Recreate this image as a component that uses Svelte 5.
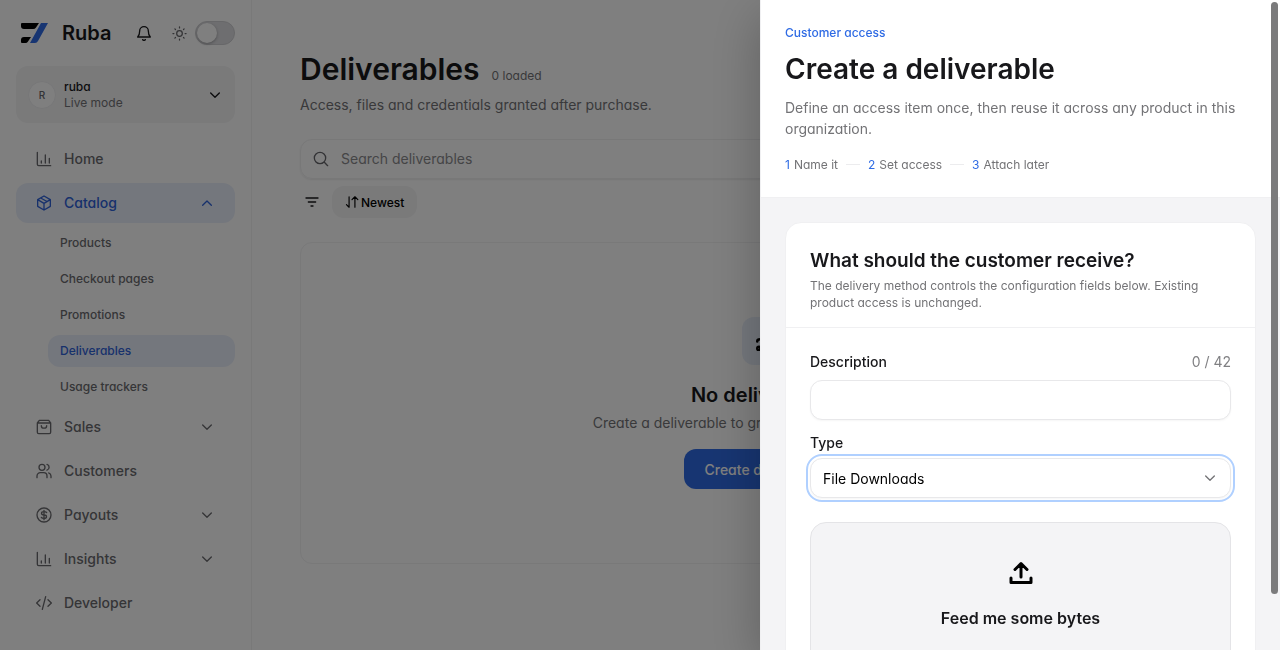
<script>
  let drawerOpen = $state(true);
  let catalogOpen = $state(true);
  let darkMode = $state(false);
  let description = $state("");
  let type = $state("files");

  const MAX_DESCRIPTION = 42;

  const nav = [
    { label: "Home", icon: "chart" },
    {
      label: "Catalog",
      icon: "box",
      active: true,
      children: ["Products", "Checkout pages", "Promotions", "Deliverables", "Usage trackers"],
    },
    { label: "Sales", icon: "bag", expandable: true },
    { label: "Customers", icon: "users" },
    { label: "Payouts", icon: "dollar", expandable: true },
    { label: "Insights", icon: "chart", expandable: true },
    { label: "Developer", icon: "code" },
  ];

  const steps = ["Name it", "Set access", "Attach later"];
</script>

{#snippet icon(name, size = 16, stroke = 2)}
  <svg
    class="icon"
    width={size}
    height={size}
    viewBox="0 0 24 24"
    fill="none"
    stroke="currentColor"
    stroke-width={stroke}
    stroke-linecap="round"
    stroke-linejoin="round"
    aria-hidden="true"
  >
    {#if name === "chart"}
      <path d="M2 2v18a2 2 0 0 0 2 2h18M8 18v-3M14 18V6M20 18v-7" />
    {:else if name === "box"}
      <path d="M12 1.500 21.500 7v10L12 22.500 2.500 17V7zM2.500 7l9.500 5.500L21.500 7M12 12.500v10M7 4.500l9.500 5.300" />
    {:else if name === "bag"}
      <path d="M2 6v14a2 2 0 0 0 2 2h16a2 2 0 0 0 2-2V6l-3-4H5zM2 6h20M8 10c0 5 8 5 8 0" />
    {:else if name === "users"}
      <circle cx="9" cy="6.500" r="4.500" />
      <path d="M1.500 22v-2.500a5 5 0 0 1 5-5h5a5 5 0 0 1 5 5V22M16.500 2.200a4.500 4.500 0 0 1 0 8.600M22.500 22v-2.500a5 5 0 0 0-3.500-4.700" />
    {:else if name === "dollar"}
      <circle cx="12" cy="12" r="10.500" />
      <path d="M16 8.500c-.6-1-1.800-1.500-4-1.500-5 0-5 5 0 5s5 5 0 5c-2.200 0-3.400-.5-4-1.500M12 5v14" />
    {:else if name === "code"}
      <path d="M6 7l-5 5 5 5M18 7l5 5-5 5M14.500 2.500l-5 19" />
    {:else if name === "down"}
      <path d="M5.500 9l6.500 6.500L18.500 9" />
    {:else if name === "up"}
      <path d="M5.500 15.500 12 9l6.500 6.500" />
    {:else if name === "bell"}
      <path d="M2.500 18h19c-2-2-3-4-3-9a6.500 6.500 0 0 0-13 0c0 5-1 7-3 9zM10 22a2.400 2.400 0 0 0 4 0" />
    {:else if name === "sun"}
      <circle cx="12" cy="12" r="4.500" />
      <path d="M12 1.500V3M12 21v1.500M1.500 12H3M21 12h1.500M4.600 4.600l1 1M18.400 18.400l1 1M4.600 19.400l1-1M18.400 5.600l1-1" />
    {:else if name === "search"}
      <circle cx="10.500" cy="10.500" r="8.500" />
      <path d="M17 17l5 5" />
    {:else if name === "filter"}
      <path d="M3 6h18M6.500 12h11M10.500 18h3" />
    {:else if name === "sort"}
      <path d="M7 3v18M2.500 16.500 7 21M17 21V3M12 8l5-5 5 5" />
    {:else if name === "upload"}
      <path d="M12 16V3M6 8.500 12 2.500l6 6M2 17v4.500h20V17" />
    {:else if name === "share"}
      <circle cx="3.500" cy="21" r="2" />
      <path d="M1.500 12.500c0-2 2-2.500 3.500-2.500h14M5.500 21h15" />
    {/if}
  </svg>
{/snippet}

<div class="app">
  <aside class="sidebar">
    <header class="brand">
      <svg class="logo" width="28" height="20" viewBox="0 0 28 20" aria-hidden="true">
        <path d="M1 0h17l-3 4.500Q14 6 12 6H3Q0 6 0 3V1Q0 0 1 0z" fill="#000" />
        <path d="M3 14h7l-3 4.500Q6 20 4.500 20H1Q0 20 0 19v-2Q0 14 3 14z" fill="#000" />
        <path d="M20 0h7L17 18q-1 2-3 2H9z" fill="#2f6be4" />
      </svg>
      <span class="brand-name">Ruba</span>
      <button class="icon-btn bell" aria-label="Notifications">{@render icon("bell", 16)}</button>
      <label class="theme">
        {@render icon("sun", 15)}
        <input type="checkbox" role="switch" aria-label="Dark mode" bind:checked={darkMode} />
      </label>
    </header>

    <button class="org">
      <span class="avatar">R</span>
      <span class="org-text">
        <span class="org-name">ruba</span>
        <span class="org-mode">Live mode</span>
      </span>
      {@render icon("down")}
    </button>

    <nav class="nav">
      {#each nav as item}
        {#if item.children}
          <button class="nav-item" class:active={item.active} onclick={() => (catalogOpen = !catalogOpen)}>
            {@render icon(item.icon)}
            <span class="nav-label">{item.label}</span>
            {@render icon(catalogOpen ? "up" : "down")}
          </button>
          {#if catalogOpen}
            <div class="subnav">
              {#each item.children as child}
                <a href="#{child}" class:current={child === "Deliverables"}>{child}</a>
              {/each}
            </div>
          {/if}
        {:else if item.expandable}
          <button class="nav-item">
            {@render icon(item.icon)}
            <span class="nav-label">{item.label}</span>
            {@render icon("down")}
          </button>
        {:else}
          <a class="nav-item" href="#{item.label}">
            {@render icon(item.icon)}
            <span class="nav-label">{item.label}</span>
          </a>
        {/if}
      {/each}
    </nav>
  </aside>

  <main class="main">
    <div class="heading">
      <h1>Deliverables</h1>
      <span class="count">0 loaded</span>
    </div>
    <p class="lead">Access, files and credentials granted after purchase.</p>

    <label class="search">
      {@render icon("search")}
      <input type="search" placeholder="Search deliverables" aria-label="Search deliverables" />
    </label>

    <div class="toolbar">
      <button class="icon-btn" aria-label="Filter">{@render icon("filter")}</button>
      <button class="sort">{@render icon("sort", 14)}Newest</button>
    </div>

    <section class="empty">
      <span class="empty-icon">{@render icon("share", 20, 3)}</span>
      <h2>No deliverables</h2>
      <p>Create a deliverable to grant access after purchase.</p>
      <button class="primary" onclick={() => (drawerOpen = true)}>Create deliverable</button>
    </section>
  </main>
</div>

{#if drawerOpen}
  <div class="backdrop" role="presentation" onclick={() => (drawerOpen = false)}></div>

  <div class="drawer" role="dialog" aria-labelledby="drawer-title">
    <header class="drawer-head">
      <p class="eyebrow">Customer access</p>
      <h2 id="drawer-title">Create a deliverable</h2>
      <p class="drawer-lead">Define an access item once, then reuse it across any product in this organization.</p>
      <ol class="steps">
        {#each steps as step, i}
          <li><span class="step-num">{i + 1}</span>{step}</li>
        {/each}
      </ol>
    </header>

    <div class="drawer-body">
      <form class="card">
        <div class="card-head">
          <h3>What should the customer receive?</h3>
          <p>The delivery method controls the configuration fields below. Existing product access is unchanged.</p>
        </div>

        <div class="card-body">
          <div class="field">
            <div class="field-row">
              <label for="description">Description</label>
              <span class="counter">{description.length} / {MAX_DESCRIPTION}</span>
            </div>
            <input id="description" class="control" type="text" maxlength={MAX_DESCRIPTION} bind:value={description} />
          </div>

          <div class="field">
            <label class="tight" for="type">Type</label>
            <div class="select">
              <select id="type" class="control focused" bind:value={type}>
                <option value="files">File Downloads</option>
              </select>
              {@render icon("down")}
            </div>
          </div>

          <button type="button" class="dropzone">
            {@render icon("upload", 24, 3)}
            <span>Feed me some bytes</span>
          </button>
        </div>
      </form>
    </div>
    <div class="scroll-thumb"></div>
  </div>
{/if}

<style>
  :global(body) {
    background: #fff;
    color: #18181b;
    font-family: Inter, "Liberation Sans", sans-serif;
    font-size: 14px;
    font-feature-settings: "cv11";
    overflow: hidden;
  }

  * {
    box-sizing: border-box;
  }

  h1,
  h2,
  h3,
  p,
  ol {
    margin: 0;
    padding: 0;
  }

  h1,
  h2,
  h3 {
    font-weight: 600;
    font-feature-settings: normal;
  }

  button,
  input,
  select {
    font: inherit;
    font-feature-settings: inherit;
    color: inherit;
  }

  button {
    border: 0;
    padding: 0;
    background: none;
    cursor: pointer;
  }

  a {
    color: inherit;
    text-decoration: none;
  }

  .icon {
    flex: none;
  }

  .app {
    display: flex;
    height: 100vh;
    overflow: hidden;
  }

  /* Sidebar */
  .sidebar {
    flex: none;
    width: 252px;
    padding: 16px;
    border-right: 1px solid #f2f2f3;
  }

  .brand {
    display: flex;
    align-items: center;
    height: 34px;
    padding-left: 5px;
    margin-bottom: 16px;
  }

  .brand-name {
    margin-left: 13px;
    font-size: 20px;
    font-weight: 600;
    line-height: 26px;
    font-feature-settings: normal;
  }

  .icon-btn {
    display: grid;
    place-items: center;
    width: 24px;
    height: 32px;
  }

  .bell {
    margin-left: auto;
  }

  .theme {
    display: flex;
    align-items: center;
    gap: 8px;
    margin-left: 16px;
    color: #66666a;
  }

  .theme input {
    appearance: none;
    display: flex;
    width: 40px;
    height: 24px;
    margin: 0;
    padding: 1px;
    border: 1px solid #cfcfd2;
    border-radius: 12px;
    background: #dcdce0;
  }

  .theme input::before {
    content: "";
    width: 20px;
    height: 20px;
    border-radius: 50%;
    background: #fff;
    box-shadow: 0 1px 3px rgba(0, 0, 0, 0.3);
  }

  .theme input:checked {
    justify-content: flex-end;
  }

  .org {
    display: flex;
    align-items: center;
    gap: 8px;
    width: 100%;
    height: 57px;
    padding: 12px;
    border-radius: 12px;
    background: #f4f4f5;
    text-align: left;
  }

  .avatar {
    display: grid;
    place-items: center;
    width: 28px;
    height: 28px;
    border: 1px solid #eeeef0;
    border-radius: 50%;
    background: #fff;
    color: #66666a;
    font-size: 10px;
    font-weight: 500;
  }

  .org-text {
    display: flex;
    flex: 1;
    flex-direction: column;
    font-size: 12px;
    line-height: 16px;
  }

  .org-name {
    font-weight: 500;
  }

  .org-mode {
    color: #737376;
  }

  .nav {
    display: flex;
    flex-direction: column;
    gap: 4px;
    margin-top: 16px;
  }

  .nav-item {
    display: flex;
    align-items: center;
    gap: 12px;
    height: 40px;
    padding: 0 20px;
    border-radius: 12px;
    color: #6b6b6f;
    font-weight: 500;
    line-height: 20px;
    text-align: left;
  }

  .nav-label {
    flex: 1;
  }

  .nav-item.active,
  .subnav .current {
    background: #e9effa;
    color: #2f62d9;
  }

  .subnav {
    display: flex;
    flex-direction: column;
    gap: 4px;
    margin-left: 32px;
  }

  .subnav a {
    padding: 0 12px;
    border-radius: 12px;
    color: #6b6b6f;
    font-size: 12px;
    font-weight: 500;
    line-height: 32px;
  }

  /* Page */
  .main {
    flex: 1;
    min-width: 0;
    padding: 48px;
  }

  .heading {
    display: flex;
    align-items: baseline;
    gap: 12px;
  }

  h1 {
    font-size: 30px;
    line-height: 42px;
  }

  .count {
    color: #737376;
    font-size: 12px;
  }

  .lead {
    margin-top: 4px;
    color: #737376;
    line-height: 21px;
  }

  .search {
    display: flex;
    align-items: center;
    gap: 12px;
    height: 40px;
    margin-top: 24px;
    padding: 0 12px;
    border: 1px solid #f0f0f1;
    border-radius: 12px;
    box-shadow: 0 1px 2px rgba(0, 0, 0, 0.08);
    color: #66666b;
  }

  .search input {
    flex: 1;
    padding: 0;
    border: 0;
    outline: 0;
    background: none;
    line-height: 20px;
  }

  .search input::placeholder {
    color: #8a8a8d;
  }

  .toolbar {
    display: flex;
    align-items: center;
    gap: 8px;
    margin-top: 7px;
  }

  .sort {
    display: flex;
    align-items: center;
    gap: 2px;
    height: 32px;
    padding: 0 13px;
    border-radius: 12px;
    background: #f4f4f5;
    color: #000;
    font-size: 12px;
    font-weight: 500;
  }

  .empty {
    display: flex;
    flex-direction: column;
    align-items: center;
    margin-top: 24px;
    padding: 74px 24px;
    border: 1px solid #f2f2f3;
    border-radius: 12px;
    text-align: center;
  }

  .empty-icon {
    display: grid;
    place-items: center;
    width: 48px;
    height: 48px;
    border-radius: 12px;
    background: #e9effa;
    color: #000;
  }

  .empty h2 {
    margin-top: 16px;
    font-size: 20px;
    line-height: 28px;
  }

  .empty p {
    margin-top: 4px;
    color: #737376;
    line-height: 20px;
  }

  .primary {
    height: 40px;
    margin-top: 16px;
    padding: 0 20px;
    border-radius: 12px;
    background: #2f6be4;
    color: #fff;
    font-weight: 500;
  }

  /* Drawer */
  .backdrop {
    position: fixed;
    inset: 0;
    background: rgba(0, 0, 0, 0.5);
  }

  .drawer {
    position: fixed;
    top: 0;
    right: 0;
    bottom: 0;
    width: 520px;
    max-width: 100%;
    border-left: 1px solid #f0f0f2;
    background: #f4f4f6;
    box-shadow: 0 16px 48px rgba(0, 0, 0, 0.25);
    overflow: hidden;
  }

  .drawer-head {
    padding: 24px;
    border-bottom: 1px solid #f0f0f2;
    background: #fff;
  }

  .eyebrow {
    color: #2f6be4;
    font-size: 12px;
    font-weight: 500;
    line-height: 17px;
  }

  .drawer-head h2 {
    margin-top: 8px;
    font-size: 28px;
    line-height: 40px;
  }

  .drawer-lead {
    margin-top: 8px;
    color: #737376;
    line-height: 21px;
  }

  .steps {
    display: flex;
    gap: 8px;
    margin-top: 17px;
    list-style: none;
    color: #737376;
    font-size: 12px;
    line-height: 17px;
  }

  .steps li {
    display: flex;
    align-items: center;
    gap: 4px;
  }

  .steps li:not(:last-child)::after {
    content: "";
    width: 14px;
    height: 1px;
    margin-left: 4px;
    background: #ececee;
  }

  .step-num {
    color: #2f6be4;
  }

  .drawer-body {
    padding: 24px;
  }

  .card {
    border: 1px solid #f0f0f2;
    border-radius: 16px;
    background: #fff;
  }

  .card-head {
    padding: 24px 24px 16px;
    border-bottom: 1px solid #f0f0f2;
  }

  .card-head h3 {
    font-size: 19px;
    line-height: 28px;
  }

  .card-head p {
    margin-top: 2px;
    color: #737376;
    font-size: 12px;
    line-height: 17px;
  }

  .card-body {
    display: flex;
    flex-direction: column;
    gap: 16px;
    padding: 24px;
  }

  .field {
    display: flex;
    flex-direction: column;
    gap: 8px;
  }

  .field-row {
    display: flex;
    justify-content: space-between;
    line-height: 20px;
  }

  .field label {
    font-weight: 500;
  }

  .field .tight {
    line-height: 14px;
  }

  .counter {
    color: #808083;
  }

  .control {
    width: 100%;
    height: 40px;
    padding: 0 12px;
    border: 1px solid #e8e8ea;
    border-radius: 12px;
    background: #fff;
    color: #000;
    box-shadow: 0 1px 2px rgba(0, 0, 0, 0.04);
  }

  .select {
    display: grid;
    align-items: center;
  }

  .select > * {
    grid-area: 1 / 1;
  }

  .select .icon {
    justify-self: end;
    margin-right: 13px;
    color: #737376;
    pointer-events: none;
  }

  select {
    appearance: none;
  }

  .focused {
    outline: 2px solid #b0d0ff;
    outline-offset: 2px;
  }

  .dropzone {
    display: flex;
    flex-direction: column;
    align-items: center;
    gap: 21px;
    height: 240px;
    margin-top: 8px;
    padding: 38px 24px;
    border: 1px solid #e4e4e7;
    border-radius: 16px;
    background: #f4f4f6;
    font-size: 16px;
    font-weight: 600;
    line-height: 24px;
    font-feature-settings: normal;
  }

  .dropzone .icon {
    color: #000;
  }

  .scroll-thumb {
    position: absolute;
    top: 2px;
    right: 2px;
    width: 7px;
    height: 91%;
    border-radius: 4px;
    background: #7b7b7c;
  }
</style>
